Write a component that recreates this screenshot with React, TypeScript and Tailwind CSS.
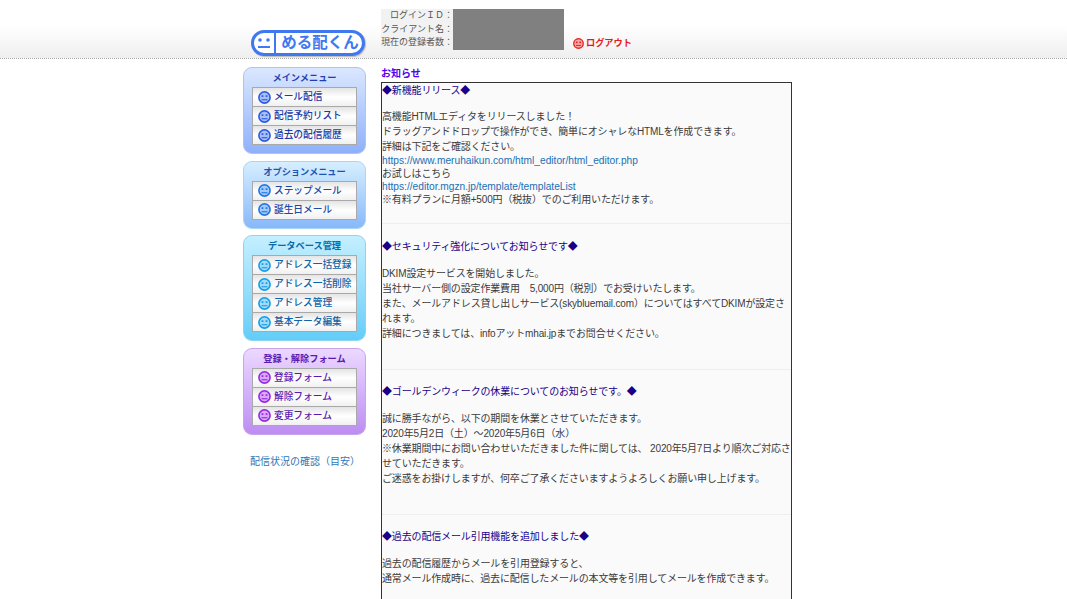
import React from 'react';

const font = { fontFamily: '"Liberation Sans", "Noto Sans CJK JP", sans-serif' };

function Face({ color, size = 13 }: { color: string; size?: number }) {
  return (
    <svg width={size} height={size} viewBox="0 0 14 14" className="shrink-0">
      <circle cx="7" cy="7" r="6" fill="#fff" stroke={color} strokeWidth="1.8" />
      <circle cx="7" cy="7" r="5" fill={color} opacity="0.4" />
      <rect x="3.8" y="4.6" width="2" height="1.8" fill={color} />
      <rect x="8.2" y="4.6" width="2" height="1.8" fill={color} />
      <rect x="3.8" y="8.8" width="6.4" height="1.2" fill={color} />
    </svg>
  );
}

type MenuProps = {
  title: string;
  items: string[];
  panel: string;
  titleColor: string;
  textColor: string;
  iconColor: string;
};

function Menu({ title, items, panel, titleColor, textColor, iconColor }: MenuProps) {
  return (
    <div className={`w-[123px] rounded-[9px] border pt-[4px] pb-[8px] px-[8px] ${panel}`}>
      <div className={`h-[15px] text-center text-[9.2px] leading-[13px] font-bold whitespace-nowrap ${titleColor}`}>{title}</div>
      <div className="border-x border-b border-[#a9a9a9] bg-white">
        {items.map((item) => (
          <div
            key={item}
            className="flex h-[19px] items-center gap-[3px] border-t border-[#a9a9a9] bg-gradient-to-b from-[#e4e4e4] via-white to-[#f0f0f0] pl-[5px]"
          >
            <Face color={iconColor} />
            <span className={`pt-[1px] text-[9.7px] font-medium whitespace-nowrap ${textColor}`}>{item}</span>
          </div>
        ))}
      </div>
    </div>
  );
}

function Line({ children, h = 15, link = false }: { children: React.ReactNode; h?: number; link?: boolean }) {
  return (
    <p
      className={`whitespace-nowrap ${link ? 'text-[10.2px] tracking-normal text-[#1a6fb5]' : 'text-[#3a3a3a]'}`}
      style={{ lineHeight: `${h}px` }}
    >
      {children}
    </p>
  );
}

function Title({ children }: { children: React.ReactNode }) {
  return <p className="text-[10px] leading-[14px] whitespace-nowrap text-[#1a0088]">{children}</p>;
}

export default function App() {
  return (
    <div className="h-[599px] w-[1067px] overflow-hidden bg-white" style={font}>
      <header className="flex h-[59px] border-b border-dotted border-[#aaaaaa] bg-gradient-to-b from-white from-[45%] to-[#efefef] pl-[251px]">
        <div className="mt-[30px] flex h-[26px] w-[114px] items-center rounded-[13px] border-[3px] border-[#3f78f0] bg-white shadow-[1px_1px_1px_#bbb]">
          <div className="flex h-full w-[22px] items-center justify-center border-r-[2px] border-[#3f78f0]">
            <svg width="16" height="14" viewBox="0 0 16 14">
              <circle cx="4" cy="4" r="1.8" fill="#3f78f0" />
              <circle cx="12" cy="4" r="1.8" fill="#3f78f0" />
              <rect x="2" y="10" width="12" height="2" fill="#3f78f0" />
            </svg>
          </div>
          <span className="flex-1 pl-[2px] text-center text-[15.5px] leading-none font-bold whitespace-nowrap text-[#3f78f0]">める配くん</span>
        </div>
        <div className="mt-[9px] ml-[16px] flex h-[41px] bg-[#f2f2f2] text-[9px] leading-[13.6px] text-[#555555]">
          <div className="w-[72px] whitespace-nowrap">
            <p className="text-right">ログインＩＤ：</p>
            <p className="text-right">クライアント名：</p>
            <p className="text-right">現在の登録者数：</p>
          </div>
          <div className="w-[111px] bg-[#808080]" />
        </div>
        <div className="mt-[37px] ml-[9px] flex h-[12px] items-center gap-[2px]">
          <Face color="#e61a1a" size={11} />
          <span className="pt-[1px] text-[9.2px] font-bold whitespace-nowrap text-[#e61a1a]">ログアウト</span>
        </div>
      </header>

      <div className="flex pl-[243px]">
        <aside className="w-[123px] pt-[8px]">
          <div className="flex flex-col gap-[6.5px]">
            <Menu
              title="メインメニュー"
              items={['メール配信', '配信予約リスト', '過去の配信履歴']}
              panel="border-[#a9c4f5] bg-gradient-to-b from-[#dbe7ff] to-[#8fb0fa]"
              titleColor="text-[#1f3fb0]"
              textColor="text-[#1a3aa8]"
              iconColor="#2a5ce8"
            />
            <Menu
              title="オプションメニュー"
              items={['ステップメール', '誕生日メール']}
              panel="border-[#a9d4f5] bg-gradient-to-b from-[#d6efff] to-[#88b8fa]"
              titleColor="text-[#1f55b0]"
              textColor="text-[#1a4aa8]"
              iconColor="#1e78e8"
            />
            <Menu
              title="データベース管理"
              items={['アドレス一括登録', 'アドレス一括削除', 'アドレス管理', '基本データ編集']}
              panel="border-[#8fd4ef] bg-gradient-to-b from-[#c4efff] to-[#62cdf8]"
              titleColor="text-[#0a6aa8]"
              textColor="text-[#0e64a8]"
              iconColor="#14a0ea"
            />
            <Menu
              title="登録・解除フォーム"
              items={['登録フォーム', '解除フォーム', '変更フォーム']}
              panel="border-[#c9a4ee] bg-gradient-to-b from-[#ecd8ff] to-[#bd8df2]"
              titleColor="text-[#5a1ab0]"
              textColor="text-[#5a1ab0]"
              iconColor="#9a28e8"
            />
          </div>
          <p className="mt-[20px] pl-[7px] text-[10px] leading-[14px] whitespace-nowrap text-[#2a78b8]">配信状況の確認（目安）</p>
        </aside>

        <main className="ml-[15px] w-[411px] pt-[8px]">
          <h1 className="h-[15px] text-[10px] leading-[14px] font-bold text-[#5500ee]">お知らせ</h1>
          <div className="h-[600px] border border-[#333333] bg-[#fafafa] pt-[1px] text-[10px] tracking-[-0.15px]">
            <Title>◆新機能リリース◆</Title>
            <div className="mt-[11px]">
              <Line>高機能HTMLエディタをリリースしました！</Line>
              <Line>ドラッグアンドドロップで操作ができ、簡単にオシャレなHTMLを作成できます。</Line>
              <Line>詳細は下記をご確認ください。</Line>
              <Line h={13} link>https://www.meruhaikun.com/html_editor/html_editor.php</Line>
              <Line h={13}>お試しはこちら</Line>
              <Line h={13} link>https://editor.mgzn.jp/template/templateList</Line>
              <Line h={13}>※有料プランに月額+500円（税抜）でのご利用いただけます。</Line>
            </div>
            <hr className="mt-[17px] mb-[16px] border-[#eeeeee]" />
            <Title>◆セキュリティ強化についてお知らせです◆</Title>
            <div className="mt-[12px]">
              <Line>DKIM設定サービスを開始しました。</Line>
              <Line>当社サーバー側の設定作業費用　5,000円（税別）でお受けいたします。</Line>
              <Line>また、メールアドレス貸し出しサービス(skybluemail.com）についてはすべてDKIMが設定さ</Line>
              <Line>れます。</Line>
              <Line>詳細につきましては、infoアットmhai.jpまでお問合せください。</Line>
            </div>
            <hr className="mt-[28px] mb-[15px] border-[#eeeeee]" />
            <Title>◆ゴールデンウィークの休業についてのお知らせです。◆</Title>
            <div className="mt-[12px]">
              <Line>誠に勝手ながら、以下の期間を休業とさせていただきます。</Line>
              <Line>2020年5月2日（土）〜2020年5月6日（水）</Line>
              <Line>※休業期間中にお問い合わせいただきました件に関しては、 2020年5月7日より順次ご対応さ</Line>
              <Line>せていただきます。</Line>
              <Line>ご迷惑をお掛けしますが、何卒ご了承くださいますようよろしくお願い申し上げます。</Line>
            </div>
            <hr className="mt-[28px] mb-[15px] border-[#eeeeee]" />
            <Title>◆過去の配信メール引用機能を追加しました◆</Title>
            <div className="mt-[12px]">
              <Line>過去の配信履歴からメールを引用登録すると、</Line>
              <Line>通常メール作成時に、過去に配信したメールの本文等を引用してメールを作成できます。</Line>
            </div>
          </div>
        </main>
      </div>
    </div>
  );
}
